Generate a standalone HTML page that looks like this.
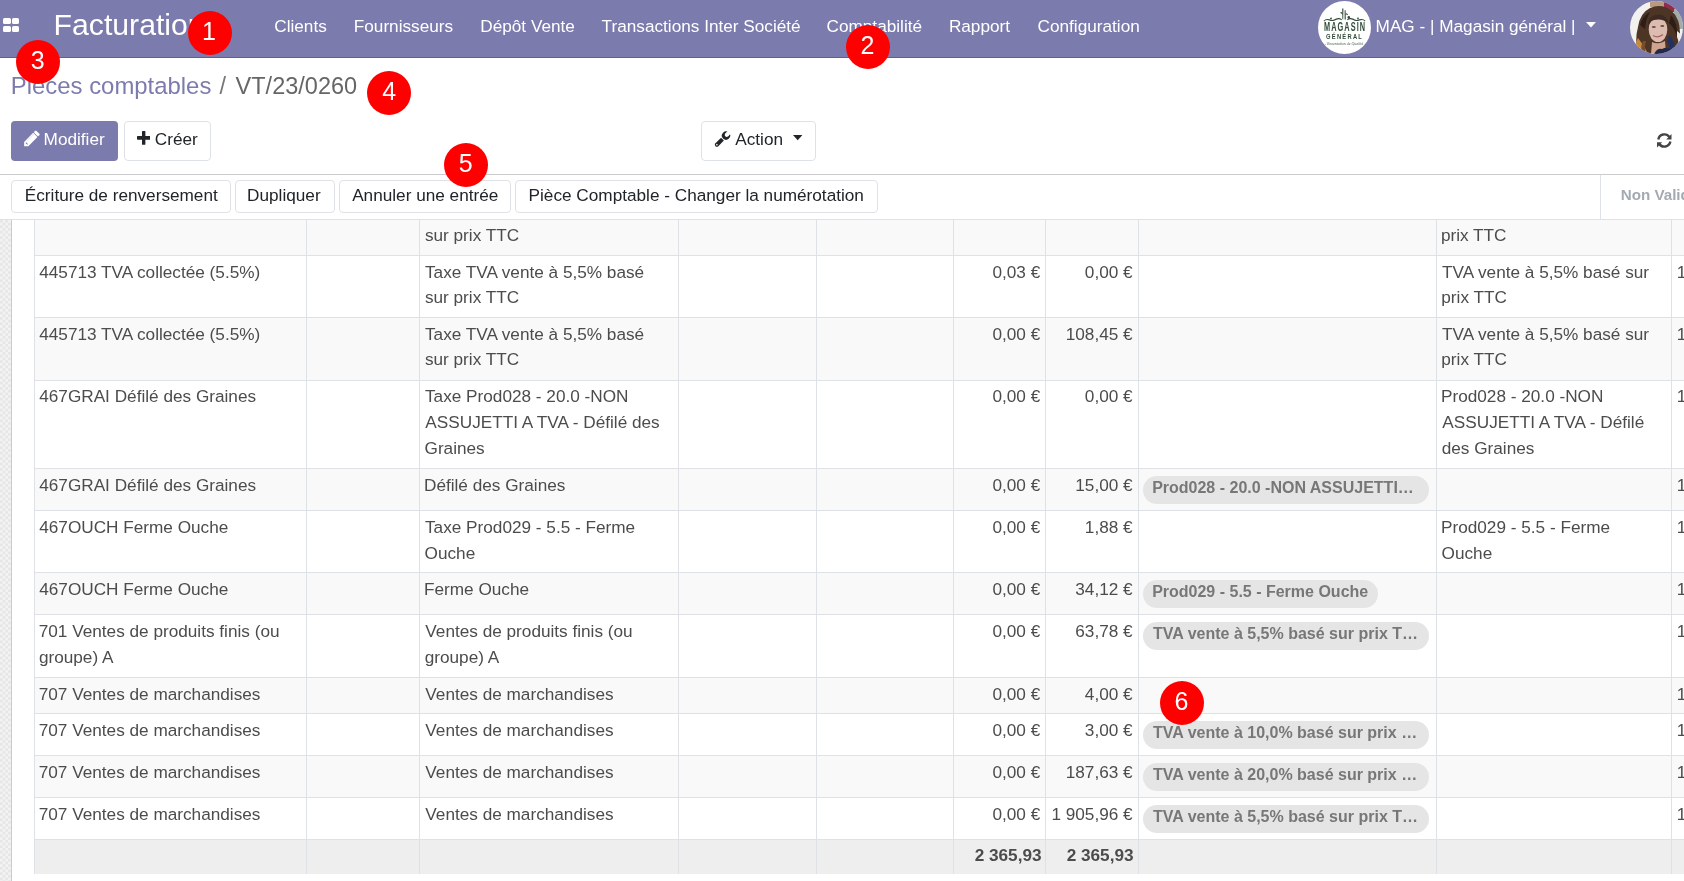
<!DOCTYPE html>
<html><head><meta charset="utf-8"><style>
html,body{margin:0;padding:0;}
body{width:1684px;height:881px;overflow:hidden;position:relative;background:#fff;font-family:"Liberation Sans",sans-serif;}
.b{position:absolute;}
.t{position:absolute;white-space:pre;}
#w{position:absolute;left:0;top:0;width:1684px;height:881px;will-change:transform;}
</style></head><body><div id="w">
<div class="b" style="left:0px;top:220px;width:11px;height:661px;background-color:#ececec;background-image:conic-gradient(#f3f3f3 25%, #e6e6e6 0 50%, #f3f3f3 0 75%, #e6e6e6 0);background-size:5.4px 5.4px;"></div>
<div class="b" style="left:11px;top:220px;width:1px;height:661px;background:#c9c9d9;"></div>
<div class="b" style="left:0px;top:0px;width:1684px;height:57px;background:#7c7bad;"></div>
<div class="b" style="left:0px;top:57px;width:1684px;height:1px;background:#5f5e97;"></div>
<div class="b" style="left:3.2px;top:18.2px;width:7.4px;height:6.3px;background:#fff;border-radius:1.6px;"></div>
<div class="b" style="left:12px;top:18.2px;width:7.4px;height:6.3px;background:#fff;border-radius:1.6px;"></div>
<div class="b" style="left:3.2px;top:25.6px;width:7.4px;height:6.3px;background:#fff;border-radius:1.6px;"></div>
<div class="b" style="left:12px;top:25.6px;width:7.4px;height:6.3px;background:#fff;border-radius:1.6px;"></div>
<span class="t" style="left:53.62px;top:6.84px;font-size:30.2px;line-height:35px;color:#fff;">Facturation</span>
<span class="t" style="left:274.23px;top:16.14px;font-size:17.2px;line-height:20px;color:#fff;">Clients</span>
<span class="t" style="left:353.79px;top:16.14px;font-size:17.2px;line-height:20px;color:#fff;">Fournisseurs</span>
<span class="t" style="left:480.29px;top:16.14px;font-size:17.2px;line-height:20px;color:#fff;">Dépôt Vente</span>
<span class="t" style="left:601.61px;top:16.14px;font-size:17.2px;line-height:20px;color:#fff;">Transactions Inter Société</span>
<span class="t" style="left:826.53px;top:16.14px;font-size:17.2px;line-height:20px;color:#fff;">Comptabilité</span>
<span class="t" style="left:948.89px;top:16.14px;font-size:17.2px;line-height:20px;color:#fff;">Rapport</span>
<span class="t" style="left:1037.53px;top:16.14px;font-size:17.2px;line-height:20px;color:#fff;">Configuration</span>
<span class="t" style="left:1375.59px;top:16.44px;font-size:17.2px;line-height:20px;color:#fff;">MAG - | Magasin général |</span>
<svg class="b" style="left:1585.5px;top:21.5px" width="10" height="6" viewBox="0 0 10 6"><path d="M0 0H10L5 5.5Z" fill="#fff"/></svg>
<svg class="b" style="left:1318px;top:1px" width="53" height="53" viewBox="0 0 53 53">
<circle cx="26.5" cy="26.5" r="26.5" fill="#fff"/>
<g fill="#2f4a36" transform="translate(0 -1.2)">
<path d="M24.2 8.8 L25.4 8.8 L25.2 19.5 L24.4 19.5Z"/>
<path d="M26.6 10.5 L27.6 10.5 L27.8 19.6 L26.6 19.6Z"/>
<path d="M22.5 12.5 Q24 11.5 24.6 14 L24.5 15 Q23.5 13 22.5 13.5Z"/>
<path d="M27.5 14 Q29 12.5 30 15 L29.5 15.5 Q28.8 14 27.6 15Z"/>
<circle cx="30.8" cy="17.6" r="1.3"/>
<path d="M5.5 21 Q8 18.2 11.5 19.5 Q15 21 18 18.8 Q21 17.2 24 19.6 L23.6 20.4 Q21 18.6 18.4 20 Q15 22.2 11.4 20.6 Q8 19.4 6.2 21.6Z"/>
<path d="M47.5 21 Q45 18.2 41.5 19.5 Q38 21 35 18.8 Q32 17.2 29 19.6 L29.4 20.4 Q32 18.6 34.6 20 Q38 22.2 41.6 20.6 Q45 19.4 46.8 21.6Z"/>
<circle cx="13" cy="18.6" r="0.9"/><circle cx="40" cy="18.6" r="0.9"/>
</g>
<g transform="translate(27.1 30.2) scale(0.7 1.16)"><text x="0" y="0" text-anchor="middle" font-family="Liberation Sans" font-weight="bold" font-size="10.5" letter-spacing="1.5" fill="#2f4a36">MAGASIN</text></g>
<g transform="translate(26.6 37.9) scale(0.8 1.1)"><text x="0" y="0" text-anchor="middle" font-family="Liberation Sans" font-weight="bold" font-size="7.2" letter-spacing="1.6" fill="#2f4a36">GÉNÉRAL</text></g>
<text x="7.6" y="43.8" font-family="Liberation Serif" font-style="italic" font-size="5" fill="#4a6350" textLength="37.6" lengthAdjust="spacingAndGlyphs">Alimentation de Qualité</text>
</svg>
<svg class="b" style="left:1630px;top:1px" width="53" height="53" viewBox="0 0 53 53">
<defs><clipPath id="av"><circle cx="26.5" cy="26.5" r="26.5"/></clipPath><filter id="bl" x="-20%" y="-20%" width="140%" height="140%"><feGaussianBlur stdDeviation="0.7"/></filter></defs>
<g clip-path="url(#av)">
<rect width="53" height="53" fill="#f3f1f0"/>
<g filter="url(#bl)">
<rect x="20" y="-2" width="14" height="8" fill="#b99a7c"/>
<rect x="34" y="-2" width="11" height="13" fill="#8e2d4c"/>
<rect x="44" y="8" width="9" height="20" fill="#a3aca6"/>
<path d="M9 53 Q4 40 8 26 Q10 12 20 7 Q32 2 42 10 Q50 18 50 32 Q50 44 45 53Z" fill="#4d3527"/>
<path d="M6 53 Q4 44 8 37 Q14 44 18 53Z" fill="#c48a3e"/>
<path d="M10 24 Q13 14 20 11 Q16 18 15 28Z" fill="#2d1f18"/>
<path d="M41 14 Q48 22 47 36 Q44 26 39 22Z" fill="#2d1f18"/>
<path d="M13 40 Q10 46 12 53 L16 53 Q14 46 16 40Z" fill="#7a4e2c"/>
<ellipse cx="28" cy="28.5" rx="9.3" ry="12.6" fill="#dcbcb0"/>
<path d="M18 21 Q21 13 30 13.5 Q37 15 38.5 22 Q32 17 24 19 Q20 20 18.5 25Z" fill="#3d2b20"/>
<ellipse cx="23.8" cy="26" rx="2" ry="0.9" fill="#6d4d40"/>
<ellipse cx="32.3" cy="25" rx="2" ry="0.9" fill="#6d4d40"/>
<path d="M23 34.5 Q28 37.5 33 33.5" stroke="#a8625c" stroke-width="1.2" fill="none"/>
<path d="M22 41 Q28 44 35 40 L36 53 L21 53Z" fill="#d0a48e"/>
<path d="M24 53 Q27 47 32 48 Q40 44 44 53Z" fill="#222a4c"/>
<path d="M39 34 Q46 40 45 53 L40 53 Q40 44 37 40Z" fill="#243060"/>
<path d="M47 30 Q53 34 53 40 L53 53 L48 53 Q50 42 47 36Z" fill="#efedea"/>
</g>
</g></svg>
<span class="t" style="left:10.84px;top:72.42px;font-size:23.9px;line-height:27px;color:#7c7bad;">Pièces comptables</span>
<span class="t" style="left:219.50px;top:72.56px;font-size:23.5px;line-height:27px;color:#777;">/</span>
<span class="t" style="left:235.60px;top:72.56px;font-size:23.5px;line-height:27px;color:#666;">VT/23/0260</span>
<div class="b" style="left:11px;top:121px;width:107px;height:40px;background:#7c7bad;border-radius:4px;"></div>
<svg class="b" style="left:23px;top:130px" width="17" height="17" viewBox="-8.5 -8.75 17 17"><g transform="rotate(45)">
<rect x="-3.0" y="-9.1" width="6.0" height="3.0" rx="1.0" fill="#fff"/>
<path d="M-3.0 -5.4 H3.0 V7.45 L0 10.45 L-3.0 7.45Z" fill="#fff"/>
<rect x="-1.3" y="6.3" width="2.6" height="0.9" fill="#7c7bad"/>
<rect x="-1.8" y="-4.8" width="0.5" height="10" fill="#7c7bad" opacity="0.3"/>
</g></svg>
<span class="t" style="left:43.59px;top:129.14px;font-size:17.2px;line-height:20px;color:#fff;">Modifier</span>
<div class="b" style="left:124px;top:121px;width:87px;height:40px;background:#fff;border:1px solid #dee2e6;border-radius:4px;box-sizing:border-box;"></div>
<svg class="b" style="left:136.7px;top:131.1px" width="13.4" height="13.8" viewBox="0 0 13.4 13.8"><path d="M5 0.6Q5 0 5.6 0H7.8Q8.4 0 8.4 0.6V5.1H12.8Q13.4 5.1 13.4 5.7V8.1Q13.4 8.7 12.8 8.7H8.4V13.2Q8.4 13.8 7.8 13.8H5.6Q5 13.8 5 13.2V8.7H0.6Q0 8.7 0 8.1V5.7Q0 5.1 0.6 5.1H5Z" fill="#212529"/></svg>
<span class="t" style="left:154.83px;top:129.14px;font-size:17.2px;line-height:20px;color:#212529;">Créer</span>
<div class="b" style="left:701px;top:121px;width:115px;height:40px;background:#fff;border:1px solid #dee2e6;border-radius:4px;box-sizing:border-box;"></div>
<svg class="b" style="left:710px;top:128px" width="24" height="22" viewBox="0 0 24 22"><defs><mask id="wm"><rect x="-30" y="-30" width="60" height="60" fill="#fff"/><circle cx="-1.0" cy="0" r="2.0" fill="#000"/><rect x="-8" y="-2.0" width="7" height="4.0" fill="#000"/><circle cx="12.9" cy="0" r="0.8" fill="#000"/></mask></defs><g transform="translate(16,7.6) rotate(135)" mask="url(#wm)" fill="#212529"><circle cx="0" cy="0" r="4.1"/><path d="M5.0 -2.0 H12.9 A2 2 0 0 1 12.9 2.0 H5.0Z"/></g></svg>
<span class="t" style="left:735.27px;top:128.94px;font-size:17.2px;line-height:20px;color:#212529;">Action</span>
<svg class="b" style="left:792.5px;top:135px" width="10" height="6" viewBox="0 0 10 6"><path d="M0 0H9.4L4.7 5.2Z" fill="#212529"/></svg>
<svg class="b" style="left:1652px;top:128px" width="24" height="24" viewBox="0 0 24 24">
<path d="M6.34 11.44 A6.1 6.1 0 0 1 17.35 9.0" fill="none" stroke="#444" stroke-width="2.4"/>
<path d="M19.5 6.1 V11.4 H14.3Z" fill="#444"/>
<path d="M18.36 13.56 A6.1 6.1 0 0 1 7.35 16.0" fill="none" stroke="#444" stroke-width="2.4"/>
<path d="M5.0 19.6 V14.2 H10.2Z" fill="#444"/>
</svg>
<div class="b" style="left:0px;top:174px;width:1684px;height:1px;background:#ccc;"></div>
<div class="b" style="left:0px;top:219px;width:1684px;height:1px;background:#dee2e6;"></div>
<div class="b" style="left:11px;top:180px;width:219.5px;height:33.400000000000006px;background:#fff;border:1px solid #dee2e6;border-radius:4px;box-sizing:border-box;"></div>
<span class="t" style="left:24.79px;top:184.64px;font-size:17.2px;line-height:20px;color:#212529;">Écriture de renversement</span>
<div class="b" style="left:235px;top:180px;width:99.5px;height:33.400000000000006px;background:#fff;border:1px solid #dee2e6;border-radius:4px;box-sizing:border-box;"></div>
<span class="t" style="left:247.09px;top:184.64px;font-size:17.2px;line-height:20px;color:#212529;">Dupliquer</span>
<div class="b" style="left:339px;top:180px;width:172px;height:33.400000000000006px;background:#fff;border:1px solid #dee2e6;border-radius:4px;box-sizing:border-box;"></div>
<span class="t" style="left:352.17px;top:184.64px;font-size:17.2px;line-height:20px;color:#212529;">Annuler une entrée</span>
<div class="b" style="left:515.4px;top:180px;width:362.80000000000007px;height:33.400000000000006px;background:#fff;border:1px solid #dee2e6;border-radius:4px;box-sizing:border-box;"></div>
<span class="t" style="left:528.59px;top:184.64px;font-size:17.2px;line-height:20px;color:#212529;">Pièce Comptable - Changer la numérotation</span>
<div class="b" style="left:1600px;top:175px;width:1px;height:44px;background:#dee2e6;"></div>
<span class="t" style="left:1620.68px;top:186.03px;font-size:15.2px;line-height:17px;color:#a3aab2;font-weight:bold;">Non Validé</span>
<div class="b" style="left:35px;top:220px;width:1649px;height:35.400000000000006px;background:#f9f9f9;"></div>
<div class="b" style="left:35px;top:255.4px;width:1649px;height:61.79999999999998px;background:#fff;"></div>
<div class="b" style="left:35px;top:317.2px;width:1649px;height:63.19999999999999px;background:#f9f9f9;"></div>
<div class="b" style="left:35px;top:380.4px;width:1649px;height:88.0px;background:#fff;"></div>
<div class="b" style="left:35px;top:468.4px;width:1649px;height:42.0px;background:#f9f9f9;"></div>
<div class="b" style="left:35px;top:510.4px;width:1649px;height:61.60000000000002px;background:#fff;"></div>
<div class="b" style="left:35px;top:572px;width:1649px;height:42px;background:#f9f9f9;"></div>
<div class="b" style="left:35px;top:614px;width:1649px;height:63.299999999999955px;background:#fff;"></div>
<div class="b" style="left:35px;top:677.3px;width:1649px;height:36.40000000000009px;background:#f9f9f9;"></div>
<div class="b" style="left:35px;top:713.7px;width:1649px;height:41.59999999999991px;background:#fff;"></div>
<div class="b" style="left:35px;top:755.3px;width:1649px;height:42.200000000000045px;background:#f9f9f9;"></div>
<div class="b" style="left:35px;top:797.5px;width:1649px;height:41.700000000000045px;background:#fff;"></div>
<div class="b" style="left:35px;top:839.2px;width:1649px;height:34.39999999999998px;background:#eeeeee;"></div>
<div class="b" style="left:35px;top:254.9px;width:1649px;height:1.0px;background:#dee2e6;"></div>
<div class="b" style="left:35px;top:316.7px;width:1649px;height:1.0px;background:#dee2e6;"></div>
<div class="b" style="left:35px;top:379.9px;width:1649px;height:1.0px;background:#dee2e6;"></div>
<div class="b" style="left:35px;top:467.9px;width:1649px;height:1.0px;background:#dee2e6;"></div>
<div class="b" style="left:35px;top:509.9px;width:1649px;height:1.0px;background:#dee2e6;"></div>
<div class="b" style="left:35px;top:571.5px;width:1649px;height:1.0px;background:#dee2e6;"></div>
<div class="b" style="left:35px;top:613.5px;width:1649px;height:1.0px;background:#dee2e6;"></div>
<div class="b" style="left:35px;top:676.8px;width:1649px;height:1.0px;background:#dee2e6;"></div>
<div class="b" style="left:35px;top:713.2px;width:1649px;height:1.0px;background:#dee2e6;"></div>
<div class="b" style="left:35px;top:754.8px;width:1649px;height:1.0px;background:#dee2e6;"></div>
<div class="b" style="left:35px;top:797.0px;width:1649px;height:1.0px;background:#dee2e6;"></div>
<div class="b" style="left:35px;top:838.7px;width:1649px;height:1.0px;background:#dee2e6;"></div>
<div class="b" style="left:34.0px;top:220px;width:1.0px;height:653.6px;background:#dee2e6;"></div>
<div class="b" style="left:305.8px;top:220px;width:1.0px;height:653.6px;background:#dee2e6;"></div>
<div class="b" style="left:418.9px;top:220px;width:1.0px;height:653.6px;background:#dee2e6;"></div>
<div class="b" style="left:677.9px;top:220px;width:1.0px;height:653.6px;background:#dee2e6;"></div>
<div class="b" style="left:815.9px;top:220px;width:1.0px;height:653.6px;background:#dee2e6;"></div>
<div class="b" style="left:953.0px;top:220px;width:1.0px;height:653.6px;background:#dee2e6;"></div>
<div class="b" style="left:1044.9px;top:220px;width:1.0px;height:653.6px;background:#dee2e6;"></div>
<div class="b" style="left:1137.8px;top:220px;width:1.0px;height:653.6px;background:#dee2e6;"></div>
<div class="b" style="left:1435.9px;top:220px;width:1.0px;height:653.6px;background:#dee2e6;"></div>
<div class="b" style="left:1670.9px;top:220px;width:1.0px;height:653.6px;background:#dee2e6;"></div>
<span class="t" style="left:424.92px;top:224.84px;font-size:17.2px;line-height:20px;color:#4c4c4c;">sur prix TTC</span>
<span class="t" style="left:1440.89px;top:224.84px;font-size:17.2px;line-height:20px;color:#4c4c4c;">prix TTC</span>
<span class="t" style="left:39.21px;top:262.04px;font-size:17.2px;line-height:20px;color:#4c4c4c;">445713 TVA collectée (5.5%)</span>
<span class="t" style="left:425.01px;top:262.04px;font-size:17.2px;line-height:20px;color:#4c4c4c;">Taxe TVA vente à 5,5% basé</span>
<span class="t" style="left:424.92px;top:287.04px;font-size:17.2px;line-height:20px;color:#4c4c4c;">sur prix TTC</span>
<span class="t" style="left:1442.01px;top:262.04px;font-size:17.2px;line-height:20px;color:#4c4c4c;">TVA vente à 5,5% basé sur</span>
<span class="t" style="left:1441.29px;top:287.04px;font-size:17.2px;line-height:20px;color:#4c4c4c;">prix TTC</span>
<span class="t" style="right:643.76px;top:262.04px;font-size:17.2px;line-height:20px;color:#4c4c4c;">0,03 €</span>
<span class="t" style="right:551.36px;top:262.04px;font-size:17.2px;line-height:20px;color:#4c4c4c;">0,00 €</span>
<span class="t" style="left:1676.69px;top:262.04px;font-size:17.2px;line-height:20px;color:#4c4c4c;">1</span>
<span class="t" style="left:39.21px;top:324.04px;font-size:17.2px;line-height:20px;color:#4c4c4c;">445713 TVA collectée (5.5%)</span>
<span class="t" style="left:425.01px;top:324.04px;font-size:17.2px;line-height:20px;color:#4c4c4c;">Taxe TVA vente à 5,5% basé</span>
<span class="t" style="left:424.92px;top:349.04px;font-size:17.2px;line-height:20px;color:#4c4c4c;">sur prix TTC</span>
<span class="t" style="left:1442.01px;top:324.04px;font-size:17.2px;line-height:20px;color:#4c4c4c;">TVA vente à 5,5% basé sur</span>
<span class="t" style="left:1441.29px;top:349.04px;font-size:17.2px;line-height:20px;color:#4c4c4c;">prix TTC</span>
<span class="t" style="right:643.76px;top:324.04px;font-size:17.2px;line-height:20px;color:#4c4c4c;">0,00 €</span>
<span class="t" style="right:551.36px;top:324.04px;font-size:17.2px;line-height:20px;color:#4c4c4c;">108,45 €</span>
<span class="t" style="left:1676.69px;top:324.04px;font-size:17.2px;line-height:20px;color:#4c4c4c;">1</span>
<span class="t" style="left:39.21px;top:386.04px;font-size:17.2px;line-height:20px;color:#4c4c4c;">467GRAI Défilé des Graines</span>
<span class="t" style="left:425.01px;top:386.04px;font-size:17.2px;line-height:20px;color:#4c4c4c;">Taxe Prod028 - 20.0 -NON</span>
<span class="t" style="left:425.37px;top:412.04px;font-size:17.2px;line-height:20px;color:#4c4c4c;">ASSUJETTI A TVA - Défilé des</span>
<span class="t" style="left:424.53px;top:438.04px;font-size:17.2px;line-height:20px;color:#4c4c4c;">Graines</span>
<span class="t" style="left:1440.99px;top:386.04px;font-size:17.2px;line-height:20px;color:#4c4c4c;">Prod028 - 20.0 -NON</span>
<span class="t" style="left:1442.37px;top:412.04px;font-size:17.2px;line-height:20px;color:#4c4c4c;">ASSUJETTI A TVA - Défilé</span>
<span class="t" style="left:1441.68px;top:438.04px;font-size:17.2px;line-height:20px;color:#4c4c4c;">des Graines</span>
<span class="t" style="right:643.76px;top:386.04px;font-size:17.2px;line-height:20px;color:#4c4c4c;">0,00 €</span>
<span class="t" style="right:551.36px;top:386.04px;font-size:17.2px;line-height:20px;color:#4c4c4c;">0,00 €</span>
<span class="t" style="left:1676.69px;top:386.04px;font-size:17.2px;line-height:20px;color:#4c4c4c;">1</span>
<span class="t" style="left:39.21px;top:475.04px;font-size:17.2px;line-height:20px;color:#4c4c4c;">467GRAI Défilé des Graines</span>
<span class="t" style="left:423.99px;top:475.04px;font-size:17.2px;line-height:20px;color:#4c4c4c;">Défilé des Graines</span>
<span class="t" style="right:643.76px;top:475.04px;font-size:17.2px;line-height:20px;color:#4c4c4c;">0,00 €</span>
<span class="t" style="right:551.36px;top:475.04px;font-size:17.2px;line-height:20px;color:#4c4c4c;">15,00 €</span>
<span class="t" style="left:1676.69px;top:475.04px;font-size:17.2px;line-height:20px;color:#4c4c4c;">1</span>
<div class="b" style="left:1143px;top:475.6px;width:285.9000000000001px;height:28.399999999999977px;background:#e5e5e5;border-radius:15px;"></div>
<span class="t" style="left:1152.13px;top:478.76px;font-size:16px;line-height:18px;color:#777;font-weight:bold;">Prod028 - 20.0 -NON ASSUJETTI…</span>
<span class="t" style="left:39.21px;top:517.04px;font-size:17.2px;line-height:20px;color:#4c4c4c;">467OUCH Ferme Ouche</span>
<span class="t" style="left:425.01px;top:517.04px;font-size:17.2px;line-height:20px;color:#4c4c4c;">Taxe Prod029 - 5.5 - Ferme</span>
<span class="t" style="left:424.59px;top:543.04px;font-size:17.2px;line-height:20px;color:#4c4c4c;">Ouche</span>
<span class="t" style="left:1440.99px;top:517.04px;font-size:17.2px;line-height:20px;color:#4c4c4c;">Prod029 - 5.5 - Ferme</span>
<span class="t" style="left:1441.59px;top:543.04px;font-size:17.2px;line-height:20px;color:#4c4c4c;">Ouche</span>
<span class="t" style="right:643.76px;top:517.04px;font-size:17.2px;line-height:20px;color:#4c4c4c;">0,00 €</span>
<span class="t" style="right:551.36px;top:517.04px;font-size:17.2px;line-height:20px;color:#4c4c4c;">1,88 €</span>
<span class="t" style="left:1676.69px;top:517.04px;font-size:17.2px;line-height:20px;color:#4c4c4c;">1</span>
<span class="t" style="left:39.21px;top:579.04px;font-size:17.2px;line-height:20px;color:#4c4c4c;">467OUCH Ferme Ouche</span>
<span class="t" style="left:423.99px;top:579.04px;font-size:17.2px;line-height:20px;color:#4c4c4c;">Ferme Ouche</span>
<span class="t" style="right:643.76px;top:579.04px;font-size:17.2px;line-height:20px;color:#4c4c4c;">0,00 €</span>
<span class="t" style="right:551.36px;top:579.04px;font-size:17.2px;line-height:20px;color:#4c4c4c;">34,12 €</span>
<span class="t" style="left:1676.69px;top:579.04px;font-size:17.2px;line-height:20px;color:#4c4c4c;">1</span>
<div class="b" style="left:1143px;top:579.6px;width:235px;height:28.399999999999977px;background:#e5e5e5;border-radius:15px;"></div>
<span class="t" style="left:1152.13px;top:582.76px;font-size:16px;line-height:18px;color:#777;font-weight:bold;">Prod029 - 5.5 - Ferme Ouche</span>
<span class="t" style="left:38.72px;top:621.04px;font-size:17.2px;line-height:20px;color:#4c4c4c;">701 Ventes de produits finis (ou</span>
<span class="t" style="left:38.88px;top:647.04px;font-size:17.2px;line-height:20px;color:#4c4c4c;">groupe) A</span>
<span class="t" style="left:425.32px;top:621.04px;font-size:17.2px;line-height:20px;color:#4c4c4c;">Ventes de produits finis (ou</span>
<span class="t" style="left:424.68px;top:647.04px;font-size:17.2px;line-height:20px;color:#4c4c4c;">groupe) A</span>
<span class="t" style="right:643.76px;top:621.04px;font-size:17.2px;line-height:20px;color:#4c4c4c;">0,00 €</span>
<span class="t" style="right:551.36px;top:621.04px;font-size:17.2px;line-height:20px;color:#4c4c4c;">63,78 €</span>
<span class="t" style="left:1676.69px;top:621.04px;font-size:17.2px;line-height:20px;color:#4c4c4c;">1</span>
<div class="b" style="left:1143px;top:621.6px;width:285.9000000000001px;height:28.399999999999977px;background:#e5e5e5;border-radius:15px;"></div>
<span class="t" style="left:1153.02px;top:624.76px;font-size:16px;line-height:18px;color:#777;font-weight:bold;">TVA vente à 5,5% basé sur prix T…</span>
<span class="t" style="left:38.72px;top:684.04px;font-size:17.2px;line-height:20px;color:#4c4c4c;">707 Ventes de marchandises</span>
<span class="t" style="left:425.32px;top:684.04px;font-size:17.2px;line-height:20px;color:#4c4c4c;">Ventes de marchandises</span>
<span class="t" style="right:643.76px;top:684.04px;font-size:17.2px;line-height:20px;color:#4c4c4c;">0,00 €</span>
<span class="t" style="right:551.36px;top:684.04px;font-size:17.2px;line-height:20px;color:#4c4c4c;">4,00 €</span>
<span class="t" style="left:1676.69px;top:684.04px;font-size:17.2px;line-height:20px;color:#4c4c4c;">1</span>
<span class="t" style="left:38.72px;top:720.04px;font-size:17.2px;line-height:20px;color:#4c4c4c;">707 Ventes de marchandises</span>
<span class="t" style="left:425.32px;top:720.04px;font-size:17.2px;line-height:20px;color:#4c4c4c;">Ventes de marchandises</span>
<span class="t" style="right:643.76px;top:720.04px;font-size:17.2px;line-height:20px;color:#4c4c4c;">0,00 €</span>
<span class="t" style="right:551.36px;top:720.04px;font-size:17.2px;line-height:20px;color:#4c4c4c;">3,00 €</span>
<span class="t" style="left:1676.69px;top:720.04px;font-size:17.2px;line-height:20px;color:#4c4c4c;">1</span>
<div class="b" style="left:1143px;top:720.6px;width:285.9000000000001px;height:28.399999999999977px;background:#e5e5e5;border-radius:15px;"></div>
<span class="t" style="left:1153.02px;top:723.76px;font-size:16px;line-height:18px;color:#777;font-weight:bold;">TVA vente à 10,0% basé sur prix …</span>
<span class="t" style="left:38.72px;top:762.04px;font-size:17.2px;line-height:20px;color:#4c4c4c;">707 Ventes de marchandises</span>
<span class="t" style="left:425.32px;top:762.04px;font-size:17.2px;line-height:20px;color:#4c4c4c;">Ventes de marchandises</span>
<span class="t" style="right:643.76px;top:762.04px;font-size:17.2px;line-height:20px;color:#4c4c4c;">0,00 €</span>
<span class="t" style="right:551.36px;top:762.04px;font-size:17.2px;line-height:20px;color:#4c4c4c;">187,63 €</span>
<span class="t" style="left:1676.69px;top:762.04px;font-size:17.2px;line-height:20px;color:#4c4c4c;">1</span>
<div class="b" style="left:1143px;top:762.6px;width:285.9000000000001px;height:28.399999999999977px;background:#e5e5e5;border-radius:15px;"></div>
<span class="t" style="left:1153.02px;top:765.76px;font-size:16px;line-height:18px;color:#777;font-weight:bold;">TVA vente à 20,0% basé sur prix …</span>
<span class="t" style="left:38.72px;top:804.04px;font-size:17.2px;line-height:20px;color:#4c4c4c;">707 Ventes de marchandises</span>
<span class="t" style="left:425.32px;top:804.04px;font-size:17.2px;line-height:20px;color:#4c4c4c;">Ventes de marchandises</span>
<span class="t" style="right:643.76px;top:804.04px;font-size:17.2px;line-height:20px;color:#4c4c4c;">0,00 €</span>
<span class="t" style="right:551.36px;top:804.04px;font-size:17.2px;line-height:20px;color:#4c4c4c;">1 905,96 €</span>
<span class="t" style="left:1676.69px;top:804.04px;font-size:17.2px;line-height:20px;color:#4c4c4c;">1</span>
<div class="b" style="left:1143px;top:804.6px;width:285.9000000000001px;height:28.399999999999977px;background:#e5e5e5;border-radius:15px;"></div>
<span class="t" style="left:1153.02px;top:807.76px;font-size:16px;line-height:18px;color:#777;font-weight:bold;">TVA vente à 5,5% basé sur prix T…</span>
<span class="t" style="right:642.48px;top:844.94px;font-size:17.2px;line-height:20px;color:#4c4c4c;font-weight:bold;">2 365,93</span>
<span class="t" style="right:550.48px;top:844.94px;font-size:17.2px;line-height:20px;color:#4c4c4c;font-weight:bold;">2 365,93</span>
<div class="b" style="left:188px;top:11px;width:44px;height:44px;border-radius:50%;background:#ff0000;"></div>
<span class="t" style="left:201.90px;top:16.94px;font-size:25px;line-height:29px;color:#fff;">1</span>
<div class="b" style="left:846px;top:25px;width:44px;height:44px;border-radius:50%;background:#ff0000;"></div>
<span class="t" style="left:860.54px;top:30.94px;font-size:25px;line-height:29px;color:#fff;">2</span>
<div class="b" style="left:16px;top:40px;width:44px;height:44px;border-radius:50%;background:#ff0000;"></div>
<span class="t" style="left:30.85px;top:45.94px;font-size:25px;line-height:29px;color:#fff;">3</span>
<div class="b" style="left:367px;top:70.9px;width:44px;height:44px;border-radius:50%;background:#ff0000;"></div>
<span class="t" style="left:382.23px;top:76.84px;font-size:25px;line-height:29px;color:#fff;">4</span>
<div class="b" style="left:444px;top:143px;width:44px;height:44px;border-radius:50%;background:#ff0000;"></div>
<span class="t" style="left:458.80px;top:148.94px;font-size:25px;line-height:29px;color:#fff;">5</span>
<div class="b" style="left:1160px;top:680.9px;width:44px;height:44px;border-radius:50%;background:#ff0000;"></div>
<span class="t" style="left:1174.53px;top:686.84px;font-size:25px;line-height:29px;color:#fff;">6</span>
</div></body></html>
